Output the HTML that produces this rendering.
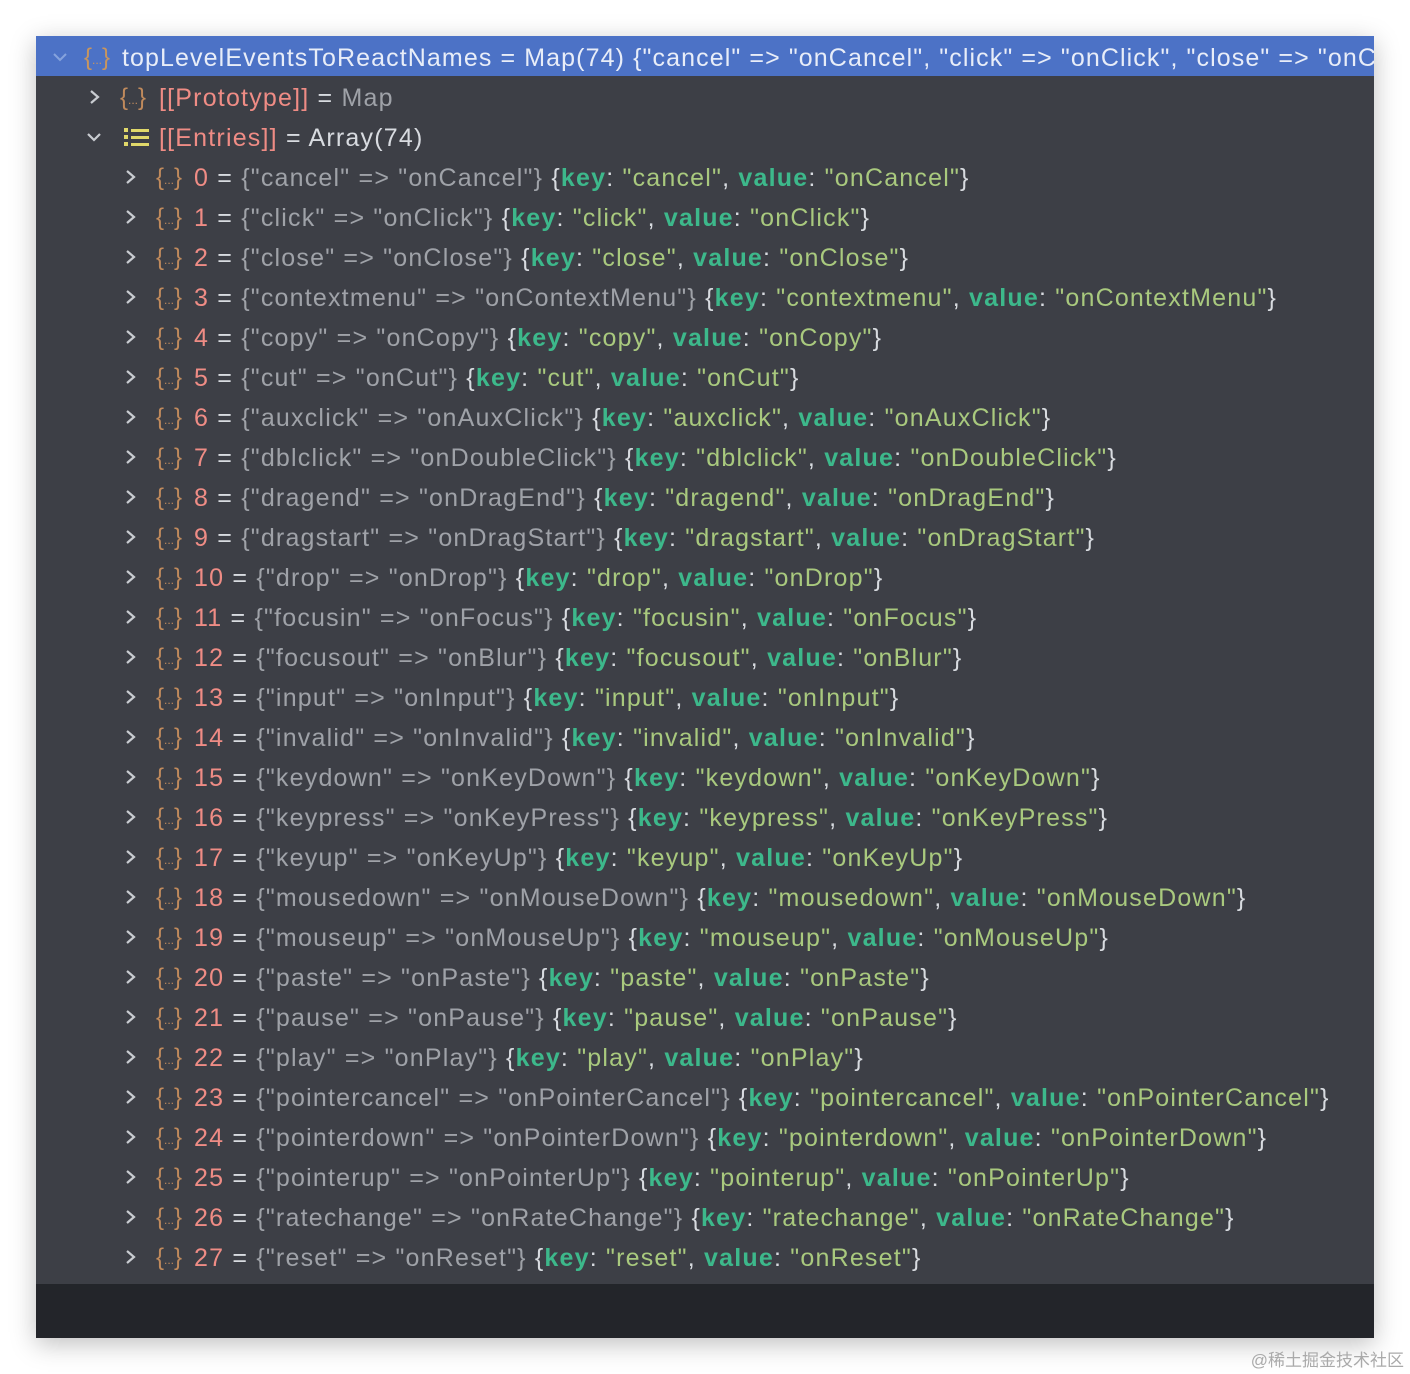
<!DOCTYPE html>
<html><head><meta charset="utf-8"><style>
body{margin:0;width:1410px;height:1374px;background:#fff;position:relative;overflow:hidden;font-family:"Liberation Sans",sans-serif}
#p{position:absolute;left:36px;top:36px;width:1338px;height:1302px;background:#23252a;box-shadow:0 6px 24px rgba(0,0,0,.25);overflow:hidden}
#c{position:absolute;left:0;top:0;width:1338px;height:1248px;background:#3d3f46}
.r{position:absolute;left:0;height:40px;line-height:44px;font-size:25px;letter-spacing:1.2px;white-space:nowrap;color:#d8dbe0;width:1338px;overflow:hidden}
.h{background:#4c72c6;color:#e8edf8;letter-spacing:1.1px}
.ch{position:absolute;top:13px}
.ic{position:absolute;top:0;color:#c08a5c;font-size:24px;letter-spacing:0}
.ic small{font-size:12px;letter-spacing:0;position:relative;top:-1px}
.n{color:#ef8c85}
.g{color:#9fa2a8}
.k{color:#3db88b;font-weight:bold}
.s{color:#a9c97e}
.t{position:absolute;top:0}
#w{position:absolute;right:6px;top:1346px;font-size:17px;color:#aaa;font-family:"Liberation Sans","Noto Sans CJK SC",sans-serif}
</style></head><body>
<div id="p"><div id="c">
<div class="r h" style="top:0"><svg class="ch" style="left:16px;top:14px" width="16" height="14"><path d="M2 4 L8 10 L14 4" stroke="#86a3dd" stroke-width="2" fill="none"/></svg><span class="ic" style="left:48px;color:#c7955f">{<small>...</small>}</span><span class="t" style="left:86px">topLevelEventsToReactNames = Map(74) {"cancel" =&gt; "onCancel", "click" =&gt; "onClick", "close" =&gt; "onClose"}</span></div>
<div class="r" style="top:40px"><svg class="ch" style="left:52px" width="14" height="16"><path d="M3 2 L10 8 L3 14" stroke="#c9ccd1" stroke-width="2.2" fill="none"/></svg><span class="ic" style="left:84px">{<small>...</small>}</span><span class="t" style="left:123px"><span class="n">[[Prototype]]</span> = <span class="g">Map</span></span></div>
<div class="r" style="top:80px"><svg class="ch" style="left:50px;top:14px" width="16" height="14"><path d="M2 4 L8 10 L14 4" stroke="#c9ccd1" stroke-width="2.2" fill="none"/></svg><svg style="position:absolute;left:86px;top:11px" width="28" height="20"><g fill="#e0d86a"><rect x="9" y="2" width="18" height="3"/><rect x="9" y="9" width="18" height="3"/><rect x="9" y="16" width="18" height="3"/><rect x="2" y="1" width="4" height="4"/><rect x="2" y="8" width="4" height="4"/><rect x="2" y="15" width="4" height="4"/></g></svg><span class="t" style="left:123px"><span class="n">[[Entries]]</span> = Array(74)</span></div>
<div id="rows"></div>
</div></div>
<div id="w">@稀土掘金技术社区</div>
<script>
var d=[["cancel","onCancel"],["click","onClick"],["close","onClose"],["contextmenu","onContextMenu"],["copy","onCopy"],["cut","onCut"],["auxclick","onAuxClick"],["dblclick","onDoubleClick"],["dragend","onDragEnd"],["dragstart","onDragStart"],["drop","onDrop"],["focusin","onFocus"],["focusout","onBlur"],["input","onInput"],["invalid","onInvalid"],["keydown","onKeyDown"],["keypress","onKeyPress"],["keyup","onKeyUp"],["mousedown","onMouseDown"],["mouseup","onMouseUp"],["paste","onPaste"],["pause","onPause"],["play","onPlay"],["pointercancel","onPointerCancel"],["pointerdown","onPointerDown"],["pointerup","onPointerUp"],["ratechange","onRateChange"],["reset","onReset"]];
var h="";d.forEach(function(e,i){h+='<div class="r" style="top:'+(120+i*40)+'px"><svg class="ch" style="left:88px" width="14" height="16"><path d="M3 2 L10 8 L3 14" stroke="#c9ccd1" stroke-width="2.2" fill="none"/></svg><span class="ic" style="left:120px">{<small>...</small>}</span><span class="t" style="left:158px"><span class="n">'+i+'</span> = <span class="g">{"'+e[0]+'" =&gt; "'+e[1]+'"}</span> {<span class="k">key</span>: <span class="s">"'+e[0]+'"</span>, <span class="k">value</span>: <span class="s">"'+e[1]+'"</span>}</span></div>';});
document.getElementById("rows").outerHTML=h;
</script>
</body></html>
